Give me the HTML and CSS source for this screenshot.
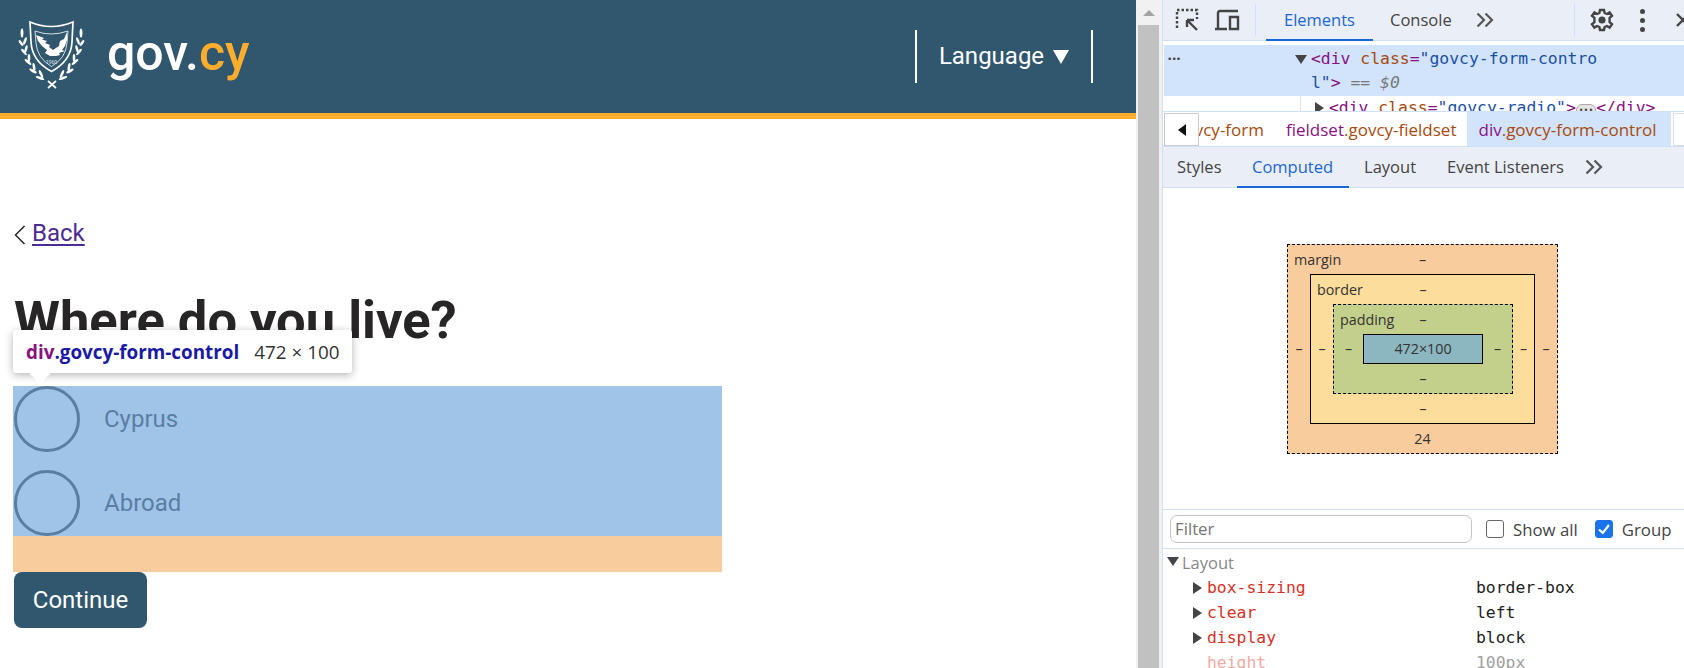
FILE: index.html
```html
<!DOCTYPE html>
<html lang="en">
<head>
<meta charset="utf-8">
<title>Where do you live?</title>
<link rel="stylesheet" href="styles.css">
</head>
<body>
<div class="app">
  <main class="page">
    <header class="site-header">
      <svg class="crest" viewBox="18 20 68 72" width="68" height="72" aria-hidden="true">
        <path class="crest-line" d="M30 22 Q51 31 73 22 L72 42 Q71 61 51.500 71.500 Q32 61 31 42 Z"/>
        <path class="crest-thin" d="M35 31 Q51 37 68 31 L67 43 Q66 58 51.500 66.500 Q37 58 36 43 Z"/>
        <path class="crest-fill" d="M36 35 L44 38 L42 39.500 L47 41 L45 43 L50 45 L49 47 L53 50 L59 46 L60 41 L64 39 L67 32 L67 40 L65 46 L62 50 L65 51 L59 53 L60 55 L56 56 L50 56 L45 53 L47 50 L42 46 L38 41 Z"/>
        <text class="crest-year" x="51.500" y="64" text-anchor="middle">1960</text>
        <g id="laurel" class="crest-fill">
          <ellipse cx="22" cy="33" rx="1.400" ry="4.500"/>
          <ellipse cx="25" cy="41" rx="1.300" ry="4" transform="rotate(20 25 41)"/>
          <ellipse cx="21" cy="43" rx="1.300" ry="3.500" transform="rotate(-35 21 43)"/>
          <ellipse cx="26" cy="49" rx="1.300" ry="4" transform="rotate(15 26 49)"/>
          <ellipse cx="24" cy="52" rx="1.300" ry="4" transform="rotate(-40 24 52)"/>
          <ellipse cx="29" cy="58" rx="1.300" ry="4" transform="rotate(0 29 58)"/>
          <ellipse cx="28" cy="62" rx="1.300" ry="4.200" transform="rotate(-50 28 62)"/>
          <ellipse cx="34" cy="67" rx="1.300" ry="4" transform="rotate(-10 34 67)"/>
          <ellipse cx="33" cy="71" rx="1.300" ry="4.200" transform="rotate(-60 33 71)"/>
          <ellipse cx="41" cy="74" rx="1.300" ry="4.200" transform="rotate(-25 41 74)"/>
          <ellipse cx="40" cy="78" rx="1.300" ry="4.500" transform="rotate(-70 40 78)"/>
        </g>
        <use href="#laurel" transform="matrix(-1 0 0 1 103 0)"/>
        <path class="crest-line" d="M48 81 L56 88 M56 81 L48 88"/>
      </svg>
      <a class="brand">gov.<span class="brand-accent">cy</span></a>
      <div class="lang">Language <svg class="lang-caret" viewBox="0 0 16 14" width="16" height="14" aria-hidden="true"><path d="M0 0H16L8 14Z"/></svg></div>
    </header>
    <div class="content">
      <a class="back-row"><svg class="back-chevron" viewBox="0 0 12 20" width="12" height="20" aria-hidden="true"><path d="M10.500 1 L1.500 10 L10.500 19"/></svg><span class="back-link">Back</span></a>
      <h1 class="title">Where do you live?</h1>
      <div class="form-wrap">
        <div class="form-control">
          <div class="radio"><span class="radio-dot"></span><span class="radio-label">Cyprus</span></div>
          <div class="radio"><span class="radio-dot"></span><span class="radio-label">Abroad</span></div>
        </div>
        <div class="tooltip"><span class="tip-tag">div</span><span class="tip-class">.govcy-form-control</span><span class="tip-size">472 × 100</span></div>
      </div>
      <button class="continue">Continue</button>
    </div>
  </main>

  <div class="scrollbar"><span class="scroll-up"></span><span class="scroll-thumb"></span></div>

  <aside class="devtools">
    <div class="tabbar top-bar">
      <svg class="tool-icon first" viewBox="0 0 24 24" width="24" height="24" aria-hidden="true"><path class="dash" d="M2 20V2H22V11"/><path class="solid" d="M22 22 L12 12 M12 12 V19 M12 12 H19"/></svg>
      <svg class="tool-icon device" viewBox="0 0 26 22" width="26" height="22" aria-hidden="true"><path class="solid" d="M1 20H13M4 20V4Q4 2 6 2H24M16 8H24V20H16Z"/></svg>
      <span class="divider"></span>
      <span class="tab active main-tab">Elements</span>
      <span class="tab main-tab console">Console</span>
      <svg class="chev" viewBox="0 0 18 16" width="18" height="16" aria-hidden="true"><path d="M1.500 1.500L8 8L1.500 14.500M9.500 1.500L16 8L9.500 14.500"/></svg>
      <span class="spacer"></span>
      <span class="divider"></span>
      <svg class="tool-icon gear" viewBox="0 0 24 24" width="24" height="24" aria-hidden="true"><path class="solid" d="M10 2H14L14.600 5L17 6L19.600 4.400L22 7.800L19.600 9.800V12V14.200L22 16.200L19.600 19.600L17 18L14.600 19L14 22H10L9.400 19L7 18L4.400 19.600L2 16.200L4.400 14.200V9.800L2 7.800L4.400 4.400L7 6L9.400 5Z"/><circle cx="12" cy="12" r="3.600" class="knob"/></svg>
      <span class="kebab"><i></i><i></i><i></i></span>
      <svg class="tool-icon close" viewBox="0 0 14 14" width="14" height="14" aria-hidden="true"><path class="solid" d="M1 1L13 13M13 1L1 13"/></svg>
    </div>

    <div class="dom">
      <div class="dom-sel">
        <span class="dom-dots">•••</span>
        <span class="tri-down"></span>
        <code class="dom-code"><b class="t">&lt;div</b> <b class="a">class</b><b class="t">=</b><b class="v">"govcy-form-contro<br>l"</b><b class="t">&gt;</b> <em class="eq">== $0</em></code>
      </div>
      <div class="dom-next">
        <span class="guide"></span>
        <span class="tri-right"></span>
        <code class="dom-code"><b class="t">&lt;div</b> <b class="a">class</b><b class="t">=</b><b class="v">"govcy-radio"</b><b class="t">&gt;</b><span class="ellipsis">•••</span><b class="t">&lt;/div&gt;</b></code>
      </div>
    </div>

    <div class="crumbs">
      <span class="crumb-back"><span class="tri-left"></span></span>
      <div class="crumb-list">
        <span class="crumb first-crumb"><b class="a">.govcy-form</b></span>
        <span class="crumb"><b class="t">fieldset</b><b class="a">.govcy-fieldset</b></span>
        <span class="crumb selected"><b class="t">div</b><b class="a">.govcy-form-control</b></span>
      </div>
      <span class="crumb-forward"></span>
    </div>

    <div class="tabbar sub-bar">
      <span class="tab sub-tab styles">Styles</span>
      <span class="tab active sub-tab">Computed</span>
      <span class="tab sub-tab">Layout</span>
      <span class="tab sub-tab">Event Listeners</span>
      <svg class="chev" viewBox="0 0 18 16" width="18" height="16" aria-hidden="true"><path d="M1.500 1.500L8 8L1.500 14.500M9.500 1.500L16 8L9.500 14.500"/></svg>
    </div>

    <div class="box-pane">
      <div class="bm bm-margin">
        <span class="bm-name">margin</span><span class="bm-top">–</span>
        <span class="bm-left">–</span>
        <div class="bm bm-border">
          <span class="bm-name">border</span><span class="bm-top">–</span>
          <span class="bm-left">–</span>
          <div class="bm bm-padding">
            <span class="bm-name">padding</span><span class="bm-top">–</span>
            <span class="bm-left">–</span>
            <div class="bm-content">472×100</div>
            <span class="bm-right">–</span>
            <span class="bm-bottom">–</span>
          </div>
          <span class="bm-right">–</span>
          <span class="bm-bottom">–</span>
        </div>
        <span class="bm-right">–</span>
        <span class="bm-bottom">24</span>
      </div>
    </div>

    <div class="filter-bar">
      <span class="filter-input">Filter</span>
      <span class="check"></span><span class="check-label">Show all</span>
      <span class="check on"><svg viewBox="0 0 18 18" width="18" height="18" aria-hidden="true"><path d="M4 9.500L7.800 13L14 5"/></svg></span><span class="check-label">Group</span>
    </div>

    <div class="props">
      <div class="prop-head"><span class="tri-down small"></span>Layout</div>
      <div class="prop"><span class="tri-right"></span><code class="prop-name">box-sizing</code><code class="prop-val">border-box</code></div>
      <div class="prop"><span class="tri-right"></span><code class="prop-name">clear</code><code class="prop-val">left</code></div>
      <div class="prop"><span class="tri-right"></span><code class="prop-name">display</code><code class="prop-val">block</code></div>
      <div class="prop faded"><span class="tri-blank"></span><code class="prop-name">height</code><code class="prop-val">100px</code></div>
    </div>
  </aside>
</div>
</body>
</html>
```
FILE: styles.css
```css
* { box-sizing: border-box; }
html, body { margin: 0; height: 100%; overflow: hidden; background: #fff; }
.app { display: flex; height: 668px; width: 1684px; overflow: hidden; }

/* ---------- page ---------- */
.page { width: 1136px; flex: none; font-family: Roboto, sans-serif; color: #272525; }
.site-header {
  height: 119px; background: #31576f; border-bottom: 6px solid #ffad2d;
  display: flex; align-items: center; padding: 0 43px 0 18px;
}
.crest { flex: none; margin-top: -1px; }
.crest-line { fill: none; stroke: #fff; stroke-width: 1.700; }
.crest-thin { fill: none; stroke: #fff; stroke-width: .8; }
.crest-fill { fill: #fff; }
.crest-year { fill: #dfe6ea; font: 5px Roboto, sans-serif; }
.brand { margin-left: 21px; margin-top: -8px; font-size: 50px; font-weight: 500; color: #fff; }
.brand-accent { color: #ffad2d; }
.lang {
  margin-left: auto; height: 53px; width: 178px;
  border-left: 2px solid #fff; border-right: 2px solid #fff;
  display: flex; align-items: center; justify-content: center; gap: 9px;
  color: #fff; font-size: 24px; padding-bottom: 2px;
}
.lang-caret { fill: #fff; margin-top: 2px; }

.content { padding: 100px 0 0 14px; }
.back-row { display: flex; align-items: center; gap: 6px; height: 28px; }
.back-chevron { fill: none; stroke: #272525; stroke-width: 1.500; margin-top: 3px; }
.back-link { font-size: 24px; color: #4c2c92; text-decoration: underline; text-underline-offset: 3px; }
.title { margin: 45px 0 0; font-size: 52.500px; line-height: 56px; font-weight: 700; color: #272525; }
.form-wrap { position: relative; margin: 38px 0 0 -1px; }
.form-control {
  width: 709px; height: 186px; background: #a0c4e8; border-bottom: 36px solid #f8cc9c;
  display: flex; flex-direction: column; gap: 18px;
}
.radio { display: flex; align-items: center; height: 66px; padding-left: 1px; }
.radio-dot { width: 66px; height: 66px; border: 3px solid #5a7ea3; border-radius: 50%; flex: none; }
.radio-label { margin-left: 24px; font-size: 24px; color: #5a7ea3; }
.tooltip {
  position: absolute; left: 0; top: -56px; height: 43px; padding: 0 13px;
  background: #fff; border-radius: 3px; box-shadow: 0 2px 8px rgba(0,0,0,.3);
  display: flex; align-items: center; white-space: nowrap;
  font: 18.850px "Open Sans", sans-serif;
}
.tooltip::after {
  content: ""; position: absolute; left: 15px; top: 42px; width: 24px; height: 12px;
  background: #fff; clip-path: polygon(0 0, 100% 0, 50% 100%);
}
.tip-tag { color: #881280; font-weight: 700; }
.tip-class { color: #1a1aa6; font-weight: 700; }
.tip-size { color: #333; margin-left: 15px; }
.continue {
  display: block; margin: 0; width: 133px; height: 56px; border: 0; border-radius: 8px;
  background: #31576f; color: #fff; font: 24px Roboto, sans-serif;
}

/* ---------- scrollbar ---------- */
.scrollbar { width: 26px; flex: none; background: #f1f1f1; padding: 0 3px 0 2px; display: flex; flex-direction: column; align-items: center; }
.scroll-up { margin-top: 10px; width: 0; height: 0; border: 6px solid transparent; border-top: 0; border-bottom: 6px solid #a3a3a3; }
.scroll-thumb { margin-top: 9px; width: 100%; flex: 1; background: #c1c1c1; }

/* ---------- devtools ---------- */
.devtools {
  flex: 1; min-width: 0; border-left: 1px solid #d0e0f8; display: flex; flex-direction: column;
  font: 16.500px "Open Sans", sans-serif; color: #444; background: #fff;
}
.tabbar { display: flex; align-items: stretch; background: #eaeef7; border-bottom: 1px solid #d0e0f8; flex: none; }
.top-bar { height: 41px; padding-left: 12px; }
.tool-icon { flex: none; align-self: center; margin-top: -1px; }
.tool-icon.device { margin-left: 15px; }
.solid { fill: none; stroke: #444; stroke-width: 2.400; }
.dash { fill: none; stroke: #444; stroke-width: 2.400; stroke-dasharray: 2.500 2; }
.knob { fill: #444; stroke: none; }
.gear { margin-left: 15px; }
.divider { width: 1px; height: 32px; align-self: center; background: #d0e0f8; margin-left: 14px; flex: none; }
.device + .divider { margin-left: 15px; }
.tab { display: flex; align-items: center; justify-content: center; border-bottom: 2px solid transparent; margin-bottom: -1px; white-space: nowrap; }
.tab.active { color: #1a66d8; border-bottom-color: #1a66d8; }
.main-tab.active { width: 107px; margin-left: 10px; }
.console { margin-left: 17px; }
.chev { align-self: center; flex: none; margin-left: 24px; fill: none; stroke: #555; stroke-width: 2.200; }
.spacer { flex: 1; }
.kebab { display: flex; flex-direction: column; gap: 4px; align-self: center; margin-left: 26px; flex: none; }
.kebab i { width: 5px; height: 5px; border-radius: 50%; background: #444; }
.close { margin-left: 31px; margin-right: -6px; }

.dom { height: 71px; flex: none; padding-top: 4px; overflow: hidden; border-bottom: 1px solid #d0e0f8; font-family: "DejaVu Sans Mono", monospace; }
.dom-sel { height: 51px; margin-left: 1px; padding-top: 2px; background: #d2e3fc; display: flex; align-items: flex-start; }
.dom-dots { width: 131px; font-size: 9px; line-height: 24px; letter-spacing: -1px; padding-left: 3px; color: #444; flex: none; }
.dom-next { display: flex; align-items: center; height: 24px; }
.guide { width: 1px; height: 24px; margin-left: 137px; margin-right: 14px; background: #dbe3ee; flex: none; }
.dom-code { font: 16.400px/24px "DejaVu Sans Mono", monospace; white-space: nowrap; }
.dom-code b { font-weight: 400; }
.t { color: #881280; }
.a { color: #a94a0d; }
.v { color: #1a4fa6; }
.eq { color: #777; }
.ellipsis { display: inline-block; font-size: 8px; line-height: 12px; border-radius: 6px; background: #e6e6e6; border: 1px solid #aaa; padding: 0 2px; }
.tri-down { width: 0; height: 0; border: 6px solid transparent; border-bottom: 0; border-top: 9px solid #444; margin-top: 8px; margin-right: 4px; flex: none; }
.tri-down.small { display: inline-block; margin: 0 3px 2px 0; }
.tri-right { width: 0; height: 0; border: 6px solid transparent; border-right: 0; border-left: 9px solid #444; margin-right: 5px; flex: none; }
.tri-blank { width: 14px; flex: none; }
.tri-left { width: 0; height: 0; border: 6px solid transparent; border-left: 0; border-right: 8px solid #111; }

.crumbs { height: 35px; flex: none; display: flex; align-items: stretch; border-bottom: 1px solid #d0e0f8; font-size: 17px; overflow: hidden; }
.crumb-back { width: 35px; flex: none; margin: 1px 0 0 1px; border: 1px solid #ccc; background: #fff; display: flex; align-items: center; justify-content: center; }
.crumb-list { display: flex; flex: 1; min-width: 0; }
.crumb { display: flex; align-items: center; padding: 0 11px; white-space: nowrap; }
.crumb b { font-weight: 400; }
.first-crumb { width: 65px; flex: none; justify-content: flex-end; padding: 0; margin-right: 11px; overflow: hidden; }
.crumb.selected { background: #d2e3fc; width: 204px; flex: none; }
.crumb-forward { width: 11px; flex: none; margin-top: 1px; border: 1px solid #ddd; border-right: 0; }

.sub-bar { height: 41px; }
.sub-tab { padding: 0 15.500px; }
.sub-tab.styles { padding: 0 15px 0 14px; }
.sub-bar .chev { margin-left: 6px; }

.box-pane { height: 322px; flex: none; display: flex; padding: 56px 0 0 124px; border-bottom: 1px solid #d0e0f8; }
.bm {
  display: grid; text-align: center; line-height: 30px; font-size: 14.300px; color: #333; position: relative;
}
.bm-margin { width: 271px; height: 210px; background: #f9cc9d; border: 1px dashed #000; grid-template: 29px 150px 29px / 22px 225px 22px; }
.bm-border { background: #fddd9b; border: 1px solid #000; grid-column: 2; grid-row: 2; grid-template: 29px 90px 29px / 22px 180px 21px; }
.bm-padding { background: #c3d08b; border: 1px dashed #000; grid-column: 2; grid-row: 2; grid-template: 29px 30px 29px / 29px 120px 29px; }
.bm-content { background: #8cb6c0; border: 1px solid #000; grid-column: 2; grid-row: 2; line-height: 28px; }
.bm-top { grid-column: 2; grid-row: 1; }
.bm-left { grid-column: 1; grid-row: 2; align-self: center; }
.bm-right { grid-column: 3; grid-row: 2; align-self: center; }
.bm-bottom { grid-column: 2; grid-row: 3; }
.bm-name { position: absolute; left: 6px; top: 0; }

.filter-bar { height: 39px; flex: none; display: flex; align-items: center; padding-left: 7px; border-bottom: 1px solid #d0e0f8; font-size: 16.800px; }
.filter-input { width: 302px; height: 28px; border: 1px solid #c4c4c4; border-radius: 7px; padding-left: 4px; line-height: 26px; color: #757575; flex: none; }
.check { width: 18px; height: 18px; border: 1px solid #666; border-radius: 3px; margin-left: 14px; flex: none; display: block; }
.check.on { background: #1a73e8; border-color: #1a73e8; margin-left: 17px; }
.check svg { display: block; margin: -1px; fill: none; stroke: #fff; stroke-width: 2.200; }
.check-label { margin-left: 9px; color: #444; white-space: nowrap; }

.props { flex: 1; overflow: hidden; }
.prop-head { display: flex; align-items: center; height: 26px; padding-left: 4px; color: #888; font-size: 16.500px; }
.prop { display: flex; align-items: center; height: 25px; padding-left: 30px; }
.prop-name { width: 269px; font: 16.400px "DejaVu Sans Mono", monospace; color: #d93025; flex: none; }
.prop-val { font: 16.400px "DejaVu Sans Mono", monospace; color: #222; }
.prop.faded .prop-name { color: #f2a9a4; }
.prop.faded .prop-val { color: #a0a0a0; }
```
